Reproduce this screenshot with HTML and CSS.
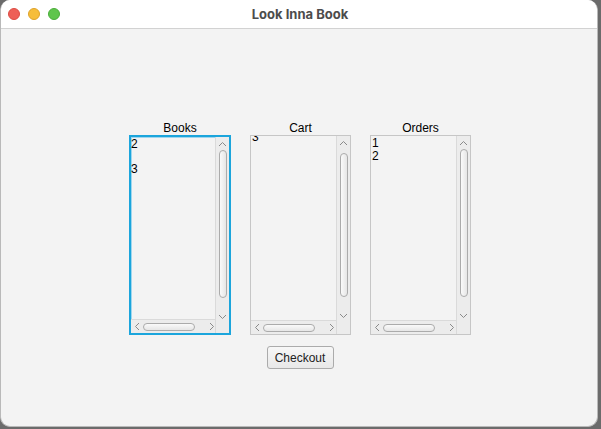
FILE: index.html
```html
<!DOCTYPE html>
<html lang="en">

<head>
    <meta charset="UTF-8" />
    <title>Look Inna Book</title>
    <link rel="stylesheet" href="styles.css">
</head>

<body>
    <div class="window">
        <div class="titlebar">
            <div class="lights">
                <span class="light red"></span>
                <span class="light yellow"></span>
                <span class="light green"></span>
            </div>
            <div class="title">Look Inna Book</div>
        </div>

        <div class="content">
            <div class="panels">
                <div class="panel">
                    <div class="label">Books</div>
                    <div class="listbox focused">
                        <ul class="items">
                            <li>2</li>
                            <li class="blank"></li>
                            <li>3</li>
                        </ul>
                        <div class="vscroll">
                            <svg class="arrow" width="9" height="6" viewBox="0 0 9 6"><path d="M1 5 L4.5 1.5 L8 5" /></svg>
                            <div class="vthumb"></div>
                            <svg class="arrow" width="9" height="6" viewBox="0 0 9 6"><path d="M1 1 L4.5 4.5 L8 1" /></svg>
                        </div>
                        <div class="hscroll">
                            <svg class="arrow" width="6" height="9" viewBox="0 0 6 9"><path d="M5 1 L1.5 4.5 L5 8" /></svg>
                            <div class="hthumb"></div>
                            <svg class="arrow" width="6" height="9" viewBox="0 0 6 9"><path d="M1 1 L4.5 4.5 L1 8" /></svg>
                        </div>
                    </div>
                </div>

                <div class="panel">
                    <div class="label">Cart</div>
                    <div class="listbox">
                        <ul class="items scrolled">
                            <li>3</li>
                        </ul>
                        <div class="vscroll">
                            <svg class="arrow" width="9" height="6" viewBox="0 0 9 6"><path d="M1 5 L4.5 1.5 L8 5" /></svg>
                            <div class="vthumb low"></div>
                            <svg class="arrow" width="9" height="6" viewBox="0 0 9 6"><path d="M1 1 L4.5 4.5 L8 1" /></svg>
                        </div>
                        <div class="hscroll">
                            <svg class="arrow" width="6" height="9" viewBox="0 0 6 9"><path d="M5 1 L1.5 4.5 L5 8" /></svg>
                            <div class="hthumb"></div>
                            <svg class="arrow" width="6" height="9" viewBox="0 0 6 9"><path d="M1 1 L4.5 4.5 L1 8" /></svg>
                        </div>
                    </div>
                </div>

                <div class="panel">
                    <div class="label">Orders</div>
                    <div class="listbox">
                        <ul class="items">
                            <li>1</li>
                            <li>2</li>
                        </ul>
                        <div class="vscroll">
                            <svg class="arrow" width="9" height="6" viewBox="0 0 9 6"><path d="M1 5 L4.5 1.5 L8 5" /></svg>
                            <div class="vthumb"></div>
                            <svg class="arrow" width="9" height="6" viewBox="0 0 9 6"><path d="M1 1 L4.5 4.5 L8 1" /></svg>
                        </div>
                        <div class="hscroll">
                            <svg class="arrow" width="6" height="9" viewBox="0 0 6 9"><path d="M5 1 L1.5 4.5 L5 8" /></svg>
                            <div class="hthumb"></div>
                            <svg class="arrow" width="6" height="9" viewBox="0 0 6 9"><path d="M1 1 L4.5 4.5 L1 8" /></svg>
                        </div>
                    </div>
                </div>
            </div>

            <button class="checkout">Checkout</button>
        </div>
    </div>
</body>

</html>
```

FILE: styles.css
```css
html,
body {
    margin: 0;
    height: 100%;
}

body {
    background-color: #6b6b6b;
    font-family: 'Liberation Sans', Arial, sans-serif;
    overflow: hidden;
}

.window {
    width: 598px;
    height: 427px;
    box-sizing: border-box;
    background-color: #f3f3f3;
    border: 1px solid #b9b9b9;
    border-top: none;
    border-radius: 10px;
    overflow: hidden;
    display: flex;
    flex-direction: column;
}

.titlebar {
    height: 28px;
    flex: none;
    background-color: #ffffff;
    border-bottom: 1px solid #d2d2d2;
    position: relative;
    display: flex;
    align-items: center;
    justify-content: center;
}

.lights {
    position: absolute;
    left: 7px;
    top: 8px;
    display: flex;
    gap: 8px;
}

.light {
    width: 12px;
    height: 12px;
    border-radius: 50%;
    box-sizing: border-box;
}

.red {
    background-color: #ee5f57;
    border: 1px solid #dc4c44;
}

.yellow {
    background-color: #f6bd3a;
    border: 1px solid #dea22a;
}

.green {
    background-color: #5fc54c;
    border: 1px solid #4aad3a;
}

.title {
    font-family: 'Inter', 'Liberation Sans', sans-serif;
    font-weight: 700;
    font-size: 13px;
    color: #4c4c4c;
    margin-left: 2px;
}

.content {
    flex: 1;
    display: flex;
    flex-direction: column;
    align-items: center;
    padding-top: 92px;
    padding-left: 2px;
}

.panels {
    display: flex;
    gap: 19px;
}

.panel {
    display: flex;
    flex-direction: column;
    align-items: center;
}

.label {
    font-size: 12px;
    line-height: 14px;
    color: #000;
}

.listbox {
    width: 101px;
    height: 200px;
    box-sizing: border-box;
    border: 1px solid #c6c6c6;
    background-color: #f3f3f3;
    display: grid;
    grid-template-columns: minmax(0, 1fr) 14px;
    grid-template-rows: minmax(0, 1fr) 14px;
    overflow: hidden;
}

.listbox.focused {
    width: 102px;
    border: 2px solid #1ba5dc;
    box-shadow: inset 0 0 0 1px #9fd6ee;
}

.items {
    list-style: none;
    margin: 0;
    padding: 0 0 0 1px;
    font-size: 12px;
    line-height: 12px;
    color: #000;
    overflow: hidden;
}

.focused .items {
    padding-left: 0;
}

.items li {
    height: 12px;
    padding-top: 1px;
}

.items li.blank {
    height: 11px;
}

.items.scrolled {
    margin-top: -6px;
}

.vscroll {
    grid-column: 2;
    grid-row: 1 / 3;
    background-color: #ececec;
    border-left: 1px solid #dadada;
    display: flex;
    flex-direction: column;
    align-items: center;
    padding: 4px 0 0;
    gap: 3px;
}

.hscroll {
    grid-column: 1;
    grid-row: 2;
    background-color: #ececec;
    border-top: 1px solid #dadada;
    display: flex;
    align-items: center;
    padding: 0 3px 0 3px;
    gap: 3px;
    min-width: 0;
}

.arrow {
    flex: none;
}

.arrow path {
    fill: none;
    stroke: #8a8a8a;
    stroke-width: 1;
}

.vscroll .arrow:last-child {
    margin-top: 13px;
}

.vthumb {
    width: 8px;
    height: 148px;
    flex: none;
    box-sizing: border-box;
    border: 1px solid #ababab;
    border-radius: 4px;
    background: linear-gradient(to right, #fafafa, #e6e6e6);
}

.vthumb.low {
    margin-top: 4px;
    height: 144px;
}

.hthumb {
    width: 52px;
    height: 8px;
    flex: none;
    box-sizing: border-box;
    border: 1px solid #ababab;
    border-radius: 4px;
    background: linear-gradient(#fafafa, #e6e6e6);
}

.hscroll .arrow:last-child {
    margin-left: 11px;
}

.checkout {
    margin-top: 11px;
    width: 67px;
    height: 23px;
    font-family: 'Liberation Sans', Arial, sans-serif;
    font-size: 12px;
    color: #222;
    background: linear-gradient(#f7f7f7, #e8e8e8);
    border: 1px solid #ababab;
    border-radius: 3px;
    padding: 0;
}
```
